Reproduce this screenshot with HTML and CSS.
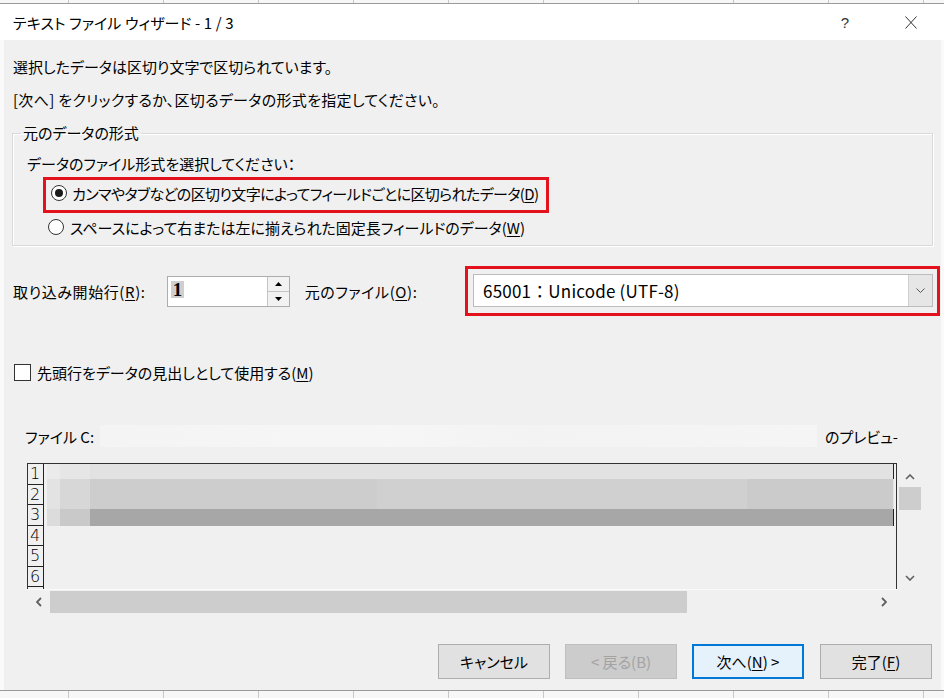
FILE: index.html
```html
<!DOCTYPE html>
<html lang="ja">
<head>
<meta charset="utf-8">
<title>テキスト ファイル ウィザード - 1 / 3</title>
<link rel="stylesheet" href="styles.css">
</head>
<body>
<div class="sheet sheet-top"></div>
<div class="dialog">
  <div class="titlebar">
    <span class="title">テキスト ファイル ウィザード - 1 / 3</span>
    <span class="help">?</span>
    <svg class="close" width="12" height="13" viewBox="0 0 12 13"><path d="M0.5 0.5 L11.5 12.5 M11.5 0.5 L0.5 12.5" stroke="#333" stroke-width="1" fill="none"/></svg>
  </div>
  <div class="content">
    <p class="line first">選択したデータは区切り文字で区切られています。</p>
    <p class="line second">[次へ] をクリックするか、区切るデータの形式を指定してください。</p>

    <fieldset class="group">
      <legend>元のデータの形式</legend>
      <p class="line prompt">データのファイル形式を選択してください：</p>
      <div class="highlight radio-box">
        <span class="radio checked"></span>
        <span class="tight">カンマやタブなどの区切り文字によってフィールドごとに区切られたデータ(<u>D</u>)</span>
      </div>
      <div class="radio-row">
        <span class="radio"></span>
        <span>スペースによって右または左に揃えられた固定長フィールドのデータ(<u>W</u>)</span>
      </div>
    </fieldset>

    <div class="import-row">
      <span class="wide">取り込み開始行(<u>R</u>):</span>
      <div class="spin">
        <span class="spin-value"><span class="sel">1</span></span>
        <span class="spin-buttons">
          <span class="spin-btn"><svg width="7" height="4" viewBox="0 0 7 4"><path d="M0 4 L3.5 0 L7 4 Z" fill="#000"/></svg></span>
          <span class="spin-btn"><svg width="7" height="4" viewBox="0 0 7 4"><path d="M0 0 L3.5 4 L7 0 Z" fill="#000"/></svg></span>
        </span>
      </div>
      <span class="origin-label wide">元のファイル(<u>O</u>):</span>
      <div class="highlight combo-box">
        <div class="combo">
          <span class="combo-text">65001：Unicode (UTF-8)</span>
          <span class="combo-btn"><svg width="9" height="5" viewBox="0 0 9 5"><path d="M0.5 0.5 L4.5 4.5 L8.5 0.5" stroke="#555" stroke-width="1" fill="none"/></svg></span>
        </div>
      </div>
    </div>

    <div class="check-row">
      <span class="checkbox"></span>
      <span>先頭行をデータの見出しとして使用する(<u>M</u>)</span>
    </div>

    <div class="file-row">
      <span>ファイル C:</span>
      <span class="blurred"></span>
      <span>のプレビュ-</span>
    </div>

    <div class="preview">
      <div class="preview-body">
        <div class="rownums">
          <span>1</span><span>2</span><span>3</span><span>4</span><span>5</span><span>6</span>
        </div>
        <div class="bands">
          <div class="band b1"></div>
          <div class="band b2"></div>
          <div class="band b3"></div>
        </div>
      </div>
      <div class="vscroll">
        <svg width="10" height="6" viewBox="0 0 10 6"><path d="M1 5 L5 1 L9 5" stroke="#606060" stroke-width="1.6" fill="none"/></svg>
        <span class="vthumb"></span>
        <svg class="down" width="10" height="6" viewBox="0 0 10 6"><path d="M1 1 L5 5 L9 1" stroke="#606060" stroke-width="1.6" fill="none"/></svg>
      </div>
      <div class="hscroll">
        <svg width="6" height="10" viewBox="0 0 6 10"><path d="M5 1 L1 5 L5 9" stroke="#606060" stroke-width="1.8" fill="none"/></svg>
        <span class="hthumb"></span>
        <svg class="right" width="6" height="10" viewBox="0 0 6 10"><path d="M1 1 L5 5 L1 9" stroke="#606060" stroke-width="1.8" fill="none"/></svg>
      </div>
    </div>

    <div class="buttons">
      <button class="btn">キャンセル</button>
      <button class="btn disabled">&lt; 戻る(B)</button>
      <button class="btn default">次へ(<u>N</u>) &gt;</button>
      <button class="btn">完了(<u>F</u>)</button>
    </div>
  </div>
</div>
<div class="sheet sheet-bottom"></div>
</body>
</html>
```
FILE: styles.css
```css
* { box-sizing: border-box; }
html, body { margin: 0; padding: 0; }
body {
  width: 944px;
  height: 698px;
  overflow: hidden;
  background: #fafafa;
  font-family: "Noto Sans CJK JP", "Noto Sans", sans-serif;
  font-feature-settings: "palt";
  font-size: 15px;
  color: #000;
}
u { text-decoration: underline; text-underline-offset: 2px; }

.sheet {
  background-color: #f7f7f7;
  background-image: linear-gradient(to right, #c8c8c8 0 1px, transparent 1px);
  background-size: 95px 100%;
  background-position: 68px 0;
}
.sheet-top { height: 4px; border-bottom: 1px solid #9a9a9a; }
.sheet-bottom { height: 8px; border-top: 1px solid #9a9a9a; }

.dialog { margin: 0 3px 0 4px; }
.titlebar {
  height: 36px;
  background: #fff;
  display: flex;
  align-items: center;
  margin: 0 -3px 0 -4px;
  padding-left: 13px;
}
.title { font-size: 15px; letter-spacing: 0.1px; }
.help { margin-left: auto; font-size: 15px; color: #333; font-family: "Liberation Sans", sans-serif; }
.close { margin: 0 27px 0 56px; }

.content {
  background: #f0f0f0;
  height: 650px;
  padding: 0 0 0 9px;
  overflow: hidden;
}
.line { margin: 0; height: 20px; line-height: 20px; white-space: nowrap; }
.first { padding-top: 17px; height: 37px; }
.second { margin-top: 13px; letter-spacing: 0.3px; }

.group {
  margin: 13px 8px 0 -1px;
  padding: 0 0 8px 0;
  border: 1px solid #d9d9d9;
  box-shadow: inset 1px 1px 0 #fff, 1px 1px 0 #fff;
  min-width: 0;
}
.group legend {
  margin-left: 8px;
  padding: 0 2px;
  line-height: 20px;
  height: 20px;
}
.prompt { margin: 11px 0 0 14px; }

.highlight { border: 3px solid #e3121d; }
.radio-box {
  margin: 3px 0 0 30px;
  width: 506px;
  height: 36px;
  display: flex;
  align-items: center;
  padding: 0 0 4px 5px;
  white-space: nowrap;
}
.tight { letter-spacing: -0.6px; }
.radio-row {
  margin: 4px 0 0 35px;
  height: 20px;
  display: flex;
  align-items: center;
  white-space: nowrap;
}
.radio {
  width: 16px; height: 16px;
  border: 1px solid #333;
  border-radius: 50%;
  background: #fff;
  margin-right: 5px;
  flex: none;
  display: flex;
  align-items: center;
  justify-content: center;
}
.radio-row .radio { margin-right: 6px; }
.radio.checked::after {
  content: "";
  width: 8px; height: 8px;
  border-radius: 50%;
  background: #1a1a1a;
}

.import-row {
  margin: 20px 0 0 0;
  height: 50px;
  display: flex;
  align-items: center;
  white-space: nowrap;
}
.wide { letter-spacing: 0.6px; }
.spin {
  margin-left: 21px;
  width: 123px;
  height: 31px;
  border: 1px solid #adadad;
  background: #fff;
  display: flex;
}
.spin-value { flex: 1; padding: 2px 0 0 3px; }
.sel {
  display: inline-block;
  background: #cfcfcf;
  font-family: "Liberation Serif", serif;
  font-weight: bold;
  font-size: 19px;
  line-height: 17px;
  height: 17px;
  padding: 0 2px;
}
.spin-buttons {
  width: 22px;
  display: flex;
  flex-direction: column;
  border-left: 1px solid #c4c4c4;
}
.spin-btn {
  flex: 1;
  display: flex;
  align-items: center;
  justify-content: center;
  background: #f2f2f2;
}
.spin-btn + .spin-btn { border-top: 1px solid #c4c4c4; }
.origin-label { margin-left: 15px; }
.combo-box {
  margin-left: auto;
  margin-right: 1px;
  width: 475px;
  height: 50px;
  padding: 5px 4px 6px 5px;
}
.combo {
  height: 33px;
  border: 1px solid #bcbcbc;
  background: #fff;
  display: flex;
  align-items: center;
}
.combo-text {
  flex: 1;
  padding-left: 9px;
  font-size: 17px;
  font-feature-settings: normal;
  letter-spacing: 0.2px;
}
.combo-btn {
  width: 24px;
  height: 100%;
  background: #e6e6e6;
  border-left: 1px solid #cfcfcf;
  display: flex;
  align-items: center;
  justify-content: center;
}

.check-row {
  margin: 46px 0 0 1px;
  height: 20px;
  display: flex;
  align-items: center;
  white-space: nowrap;
}
.checkbox {
  width: 17px; height: 17px;
  border: 1px solid #333;
  background: #fff;
  margin-right: 6px;
}

.file-row {
  margin: 44px 43px 0 12px;
  height: 20px;
  display: flex;
  align-items: center;
  white-space: nowrap;
}
.blurred {
  flex: 1;
  height: 22px;
  margin: 0 8px 0 6px;
  background: linear-gradient(to right, #f4f4f4, #f6f6f6 40%, #f3f3f3 60%, #f5f5f5);
}

.preview {
  margin: 17px 0 0 14px;
  width: 894px;
  display: grid;
  grid-template-columns: 870px 24px;
  grid-template-rows: 126px 24px;
}
.preview-body {
  border: 1px solid #333;
  border-bottom: none;
  display: flex;
  overflow: hidden;
}
.rownums {
  width: 16px;
  flex: none;
  display: flex;
  flex-direction: column;
  border-right: 1px solid #222;
}
.rownums span {
  height: 20.5px;
  border-bottom: 1px solid #222;
  font-family: "DejaVu Sans", sans-serif;
  font-weight: 200;
  font-size: 16px;
  line-height: 19px;
  padding-left: 2px;
  font-feature-settings: normal;
}
.bands { flex: 1; padding: 0 2px 0 3px; }
.band { border-right: 1px solid #222; }
.b1 { height: 15px; background: linear-gradient(to right, #ebebeb 0 13px, #e6e6e6 13px 43px, #e2e2e2 43px); }
.b2 { height: 30px; background: linear-gradient(to right, #e3e3e3 0 13px, #d7d7d7 13px 43px, #cdcdcd 43px 330px, #d0d0d0 330px 700px, #cbcbcb 700px); border-right-color: transparent; }
.b3 { height: 17px; background: linear-gradient(to right, #dcdcdc 0 13px, #c9c9c9 13px 43px, #a7a7a7 43px); }

.vscroll {
  display: flex;
  flex-direction: column;
  align-items: center;
  padding-top: 11px;
  padding-left: 2px;
}
.vthumb { width: 22px; height: 23px; background: #cdcdcd; margin-top: 7px; }
.vscroll .down { margin-top: 65px; }
.hscroll {
  grid-column: 1 / 2;
  display: flex;
  align-items: center;
  border-top: 1px solid #fafafa;
  padding-left: 9px;
}
.hthumb { width: 637px; height: 22px; background: #cdcdcd; margin-left: 8px; }
.hscroll .right { margin-left: auto; margin-right: 10px; }

.buttons {
  margin: 31px 9px 0 0;
  display: flex;
  justify-content: flex-end;
  gap: 15px;
}
.btn {
  width: 112px;
  height: 35px;
  border: 1px solid #adadad;
  background: #e1e1e1;
  font-family: inherit;
  font-feature-settings: "palt";
  font-size: 15px;
  color: #000;
  padding: 0;
}
.btn.disabled { background: #cccccc; border-color: #bfbfbf; color: #a3a3a3; }
.btn.default { border: 2px solid #0078d7; background: #e5f1fb; }
.btn:last-child { margin-left: 1px; }
```
